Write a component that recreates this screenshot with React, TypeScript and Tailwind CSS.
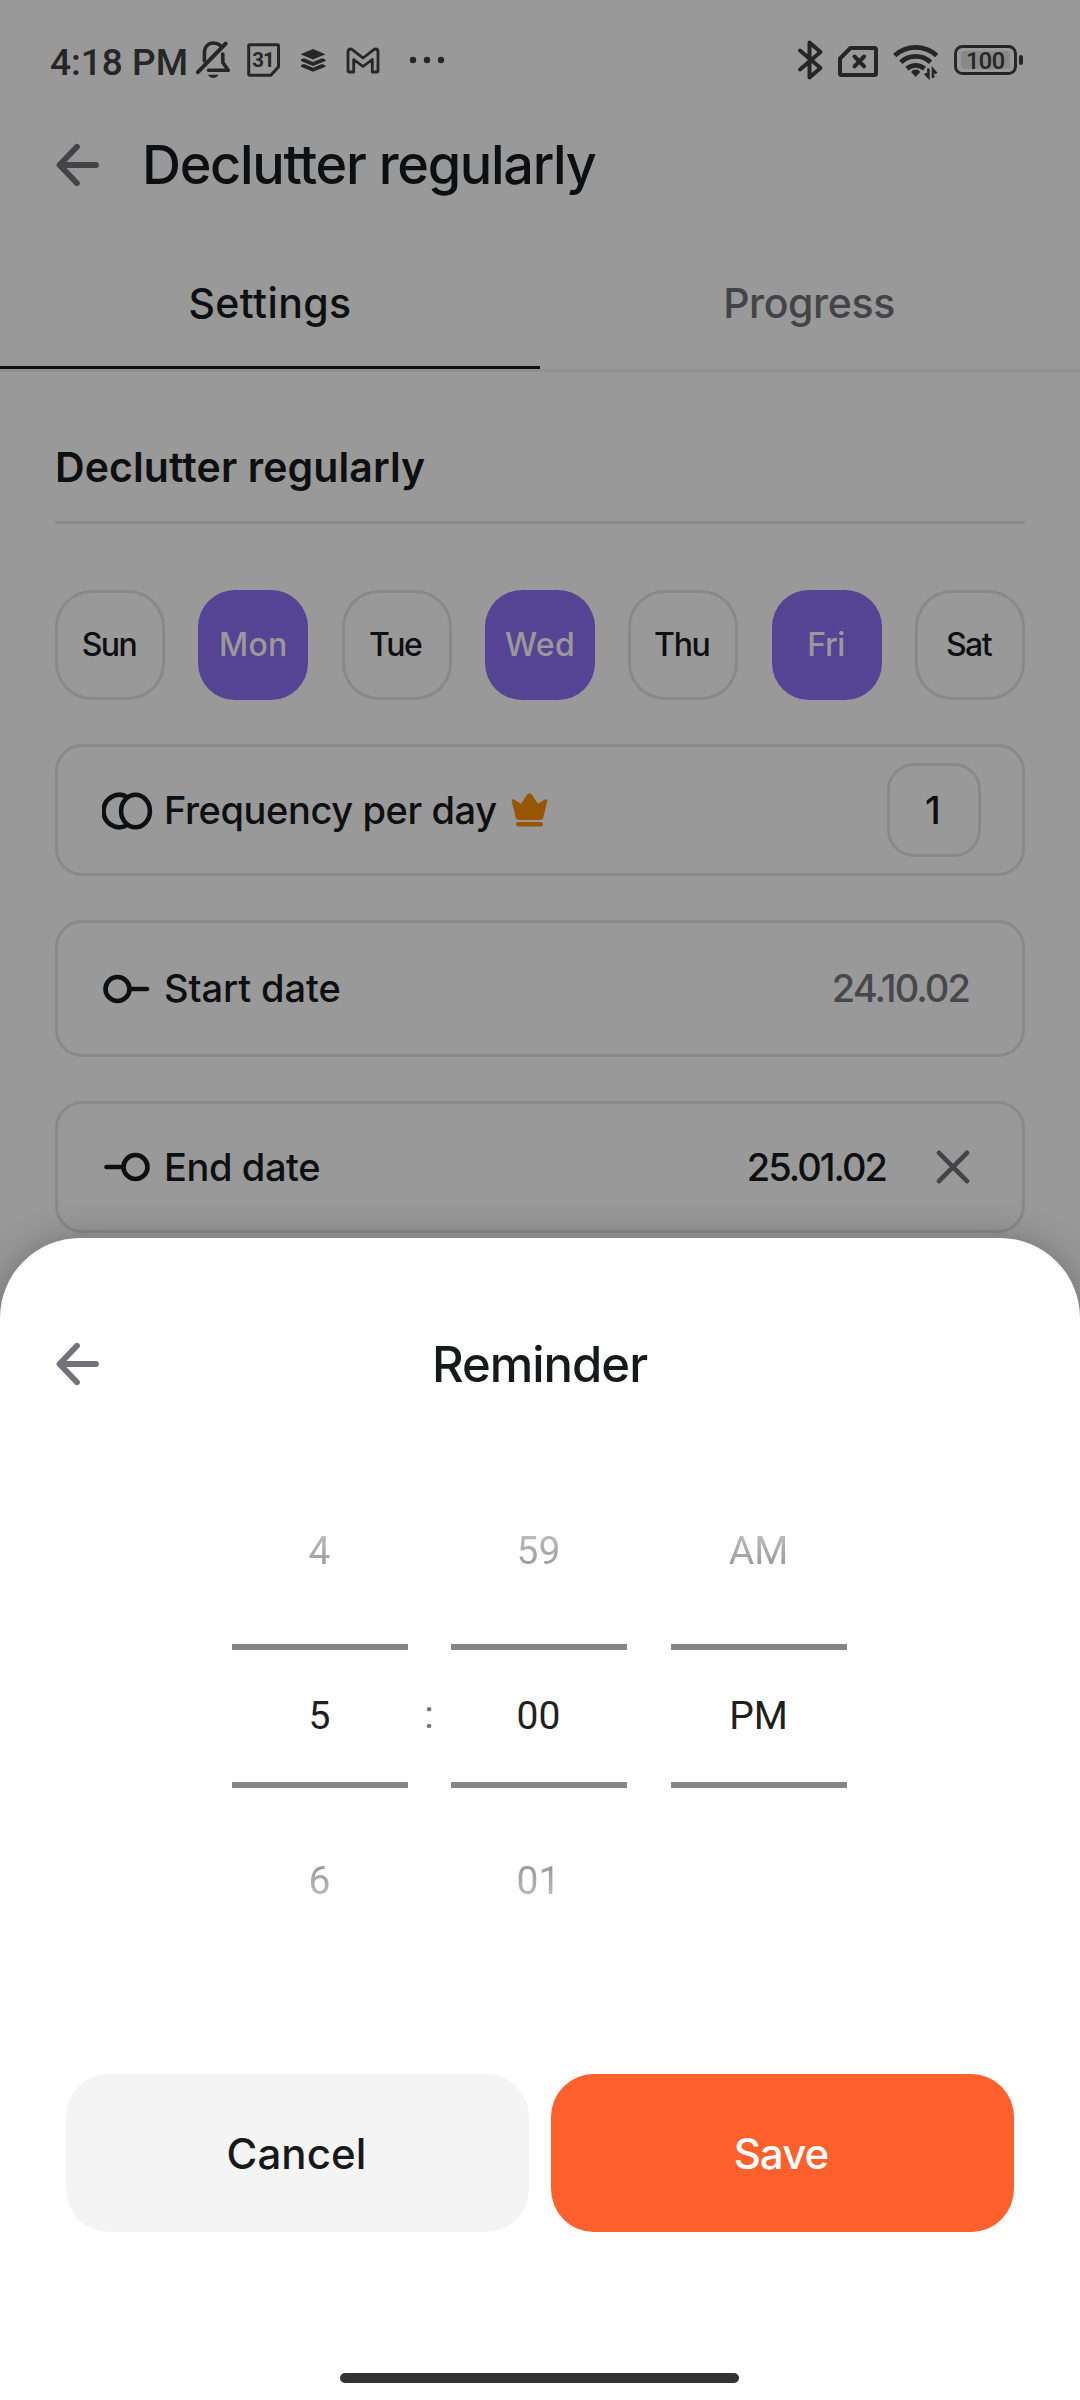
import type { ReactNode } from "react";

const STATUS = "#404040";

function BackArrow() {
  return (
    <svg width="48" height="48" viewBox="0 0 48 48" fill="none" stroke="#727278" strokeWidth="5.8" strokeLinecap="round" strokeLinejoin="round" className="shrink-0">
      <path d="M42 24H6M23 5.8 5.5 24 23 42.2" />
    </svg>
  );
}

function StatusBar() {
  return (
    <div className="flex h-[120px] items-center pl-[50px] pr-[56px] font-[Roboto] text-[#404040]">
      <span className="w-[146px] whitespace-nowrap text-[37px] font-medium leading-[44px] pt-[6px]">4:18 PM</span>
      <svg width="36" height="38" viewBox="0 0 36 38" fill="none" stroke={STATUS} strokeWidth="3.6" strokeLinecap="round" className="shrink-0">
        <path d="M1.9 31.2 29.6 2.6" strokeWidth="4" />
        <path d="M8.4 20V12.5C8.4 6 12 2 17.3 2 20 2 22.5 2.8 24.2 4.3" />
        <path d="M26.8 13V21.5L32.3 29.3H12.5" strokeLinejoin="round" />
        <path d="M12 33.8H22.5Q20.5 37 17.3 37T12 33.8Z" fill={STATUS} stroke="none" />
      </svg>
      <svg width="33" height="34" viewBox="0 0 33 34" fill="none" stroke={STATUS} className="ml-[15px] shrink-0">
        <path d="M3 1.7H30.5Q31.5 1.7 31.5 3V23.8L23.8 32.3H3Q1.7 32.3 1.7 31V3Q1.7 1.7 3 1.7Z" strokeWidth="3" />
        <text x="16" y="24" textAnchor="middle" fontFamily="Roboto" fontWeight="700" fontSize="20.5" letterSpacing="-1" fill={STATUS} stroke="none">31</text>
      </svg>
      <svg width="25" height="23" viewBox="0 0 25 23" fill={STATUS} className="ml-[21px] shrink-0">
        <path d="M12 0 24.5 5.2 12 10.4-.5 5.2Z" />
        <path d="M0 10.2 3 9.2 12 13 21 9.2 24.5 10.6V12L12 17 0 12Z" />
        <path d="M0 16 3 15 12 18.8 21 15 24.5 16.4V17.8L12 22.8 0 17.8Z" />
      </svg>
      <svg width="34" height="27" viewBox="0 0 34 27" fill="none" stroke={STATUS} strokeWidth="2.8" strokeLinejoin="round" className="ml-[20px] shrink-0">
        <path d="M2 23.5V5Q2 2 4.5 2 5.5 2 6.5 2.8L17 11 27.5 2.8Q28.5 2 29.5 2 32 2 32 5V23.5Q32 25 30.5 25H26.3V12.5L17 19.5 7.7 12.5V25H3.5Q2 25 2 23.5Z" />
      </svg>
      <svg width="36" height="8" viewBox="0 0 36 8" fill={STATUS} className="ml-[29px] shrink-0">
        <circle cx="4" cy="4" r="3.2" />
        <circle cx="18" cy="4" r="3.2" />
        <circle cx="32" cy="4" r="3.2" />
      </svg>
      <svg width="27" height="42" viewBox="0 0 27 42" fill="none" stroke={STATUS} strokeWidth="4" strokeLinecap="round" strokeLinejoin="round" className="ml-auto shrink-0">
        <path d="M3 11.5 23.5 29 12.5 38.5V3.5L23.5 13 3 30.5" />
      </svg>
      <svg width="40" height="31" viewBox="0 0 40 31" fill="none" stroke={STATUS} strokeWidth="4" strokeLinejoin="round" className="ml-[14px] mt-[3px] shrink-0">
        <path d="M12.5 2H36.5Q38 2 38 3.5V27.5Q38 29 36.5 29H3.5Q2 29 2 27.5V12.5Z" />
        <path d="m16.5 10.5 9.6 9.8m0-9.8-9.6 9.8" strokeLinecap="round" />
      </svg>
      <svg width="48" height="38" viewBox="0 0 48 38" fill="none" stroke={STATUS} strokeWidth="4.8" className="ml-[14px] mt-[2px] shrink-0">
        <path d="M2.7 13.6A31 31 0 0 1 44.7 13.6" />
        <path d="M8.8 20.2A22 22 0 0 1 38.6 20.2" />
        <path d="M14.9 26.6A13.5 13.5 0 0 1 32.5 26.6" />
        <path d="M23.7 27.6Q27 27.6 28.3 30L23.7 35 19.1 30Q20.4 27.6 23.7 27.6Z" fill={STATUS} stroke="none" />
        <path d="M36.4 26.5V35L33 31.5M41 36V27.5L44.5 31.5" strokeWidth="2.6" />
      </svg>
      <svg width="70" height="30" viewBox="0 0 70 30" fill="none" className="ml-[14px] shrink-0">
        <rect x="1.5" y="1.5" width="60" height="27" rx="7" stroke={STATUS} strokeWidth="3" />
        <rect x="7" y="6" width="49" height="18" rx="3.5" fill="#e4e4e4" />
        <rect x="65" y="10" width="4" height="10" rx="2" fill={STATUS} />
        <text x="31.5" y="24" textAnchor="middle" fontFamily="Roboto" fontSize="23.5" fontWeight="500" fill={STATUS} textLength="39">100</text>
      </svg>
    </div>
  );
}

const days = [
  { label: "Sun", on: false, tracking: "tracking-[-1.5px] pr-[2px]" },
  { label: "Mon", on: true, tracking: "tracking-[0.3px]" },
  { label: "Tue", on: false, tracking: "tracking-[-1.5px] pr-[3px]" },
  { label: "Wed", on: true, tracking: "tracking-[0.3px]" },
  { label: "Thu", on: false, tracking: "tracking-[-1.3px] pr-[3px]" },
  { label: "Fri", on: true, tracking: "tracking-[-0.4px] pr-[1px]" },
  { label: "Sat", on: false, tracking: "tracking-[-1.6px] pr-[3px]" },
];

function Card({ children, className }: { children: ReactNode; className: string }) {
  return (
    <div className={`mt-11 flex items-center rounded-[27px] border-[3px] border-[#e4e4e7] pl-[43px] text-[38px] font-medium ${className}`}>
      {children}
    </div>
  );
}

function Column({ prev, current, next }: { prev: string; current: string; next?: string }) {
  return (
    <div className="flex w-[176px] flex-col text-center text-[39px] leading-[46px]">
      <div className="flex h-[187px] items-center justify-center">
        <span className="bg-linear-to-b from-[#c2c2c2] to-[#939393] bg-clip-text text-transparent">{prev}</span>
      </div>
      <div className="flex h-36 items-center justify-center border-y-[6px] border-[#868686] text-[#1f1f20]">{current}</div>
      <div className="flex h-[185px] items-center justify-center">
        <span className="bg-linear-to-b from-[#939393] to-[#c2c2c2] bg-clip-text text-transparent">{next}</span>
      </div>
    </div>
  );
}

export default function App() {
  return (
    <div className="relative h-[2400px] w-[1080px] overflow-hidden bg-white font-[Inter,sans-serif] text-[#18191b]">
      <StatusBar />
      <header className="flex h-[90px] items-center pl-[54px]">
        <BackArrow />
        <h1 className="ml-10 whitespace-nowrap text-[54px] font-medium leading-none tracking-[-1.3px]">Declutter regularly</h1>
      </header>
      <nav className="mt-[30px] flex h-[132px] border-b-[3px] border-[#f2f2f2] text-[41px] font-medium">
        <div className="flex w-1/2 items-center justify-center border-b-[3px] border-[#191c1b] pt-[2px] tracking-[0.4px]">Settings</div>
        <div className="flex w-1/2 items-center justify-center border-b-[3px] border-transparent pr-[2px] pt-[2px] tracking-[-0.4px] text-[#727278]">Progress</div>
      </nav>
      <main className="px-[55px] pt-[41px]">
        <h2 className="flex h-[111px] items-center border-b-[3px] border-[#e4e4e7] pt-[2px] text-[41px] font-semibold tracking-[0.1px]">
          <span>Declutter regularly</span>
        </h2>
        <div className="mt-[66px] flex justify-between text-[32px] font-medium">
          {days.map((d) => (
            <div
              key={d.label}
              className={`flex size-[110px] items-center justify-center rounded-[37px] ${d.tracking} ${
                d.on ? "bg-[#8e70f7] text-white" : "border-[3px] border-[#e4e4e7]"
              }`}
            >
              {d.label}
            </div>
          ))}
        </div>
        <Card className="h-[132px] pr-[41px]">
          <svg width="52" height="38" viewBox="0 0 52 38" fill="none" stroke="#18191b" strokeWidth="4.6" className="ml-px mt-[2px] shrink-0">
            <path d="M24.4 33.5A15.8 16.2 0 1 1 24.4 4.5" />
            <ellipse cx="33.5" cy="19" rx="14.4" ry="16.2" />
          </svg>
          <span className="ml-[10px] whitespace-nowrap tracking-[-0.4px]">Frequency per day</span>
          <svg width="37" height="34" viewBox="0 0 37 34" fill="#ff9000" className="ml-[14px] shrink-0">
            <path d="M.6 7.200Q1.300 5.600 3 6.500L10 10.700 16.400 1.200Q18.500-.9 20.600 1.200L27 10.700 34 6.500Q36 5.600 36.400 7.200L32.500 24Q31.700 27 29 27H8Q5.300 27 4.500 24Z" />
            <rect x="5" y="29" width="27" height="4.4" rx="2.2" />
          </svg>
          <span className="ml-auto flex size-[94px] items-center justify-center rounded-[27px] border-[3px] border-[#e4e4e7] pr-[2px]">1</span>
        </Card>
        <Card className="h-[137px] pr-[53px]">
          <svg width="52" height="38" viewBox="0 0 52 38" fill="none" stroke="#18191b" strokeWidth="4.6" strokeLinecap="round" className="shrink-0">
            <circle cx="16.5" cy="19" r="12" />
            <path d="M29 19H46" />
          </svg>
          <span className="ml-[11px] tracking-[-0.1px]">Start date</span>
          <span className="ml-auto tracking-[-1.9px] text-[#78787f]">24.10.02</span>
        </Card>
        <Card className="h-[132px] pr-[52px]">
          <svg width="52" height="38" viewBox="0 0 52 38" fill="none" stroke="#18191b" strokeWidth="4.6" strokeLinecap="round" className="shrink-0">
            <circle cx="34.5" cy="19" r="12" />
            <path d="M5.5 19H22" />
          </svg>
          <span className="ml-[11px] tracking-[-0.4px]">End date</span>
          <span className="ml-auto tracking-[-2px]">25.01.02</span>
          <svg width="34" height="34" viewBox="0 0 34 34" fill="none" stroke="#727278" strokeWidth="4.6" strokeLinecap="round" className="ml-[50px] shrink-0">
            <path d="m3 2.800 28 28.400M31 2.800 3 31.200" />
          </svg>
        </Card>
      </main>

      <div className="absolute inset-0 bg-black/40" />

      <section className="absolute inset-x-0 bottom-0 flex h-[1162px] flex-col rounded-t-[80px] bg-white shadow-[0_4px_40px_rgba(0,0,0,0.3)]">
        <div className="mt-[84px] grid h-[84px] grid-cols-[48px_1fr_48px] items-center px-[54px]">
          <BackArrow />
          <h2 className="pr-[1px] text-center text-[49px] font-medium leading-none tracking-[-1px]">Reminder</h2>
        </div>
        <div className="mt-[51px] flex items-center justify-center pr-[2px] font-[Roboto]">
          <Column prev="4" current="5" next="6" />
          <span className="w-[43px] text-center text-[39px] leading-[46px] text-[#757575]">:</span>
          <Column prev="59" current="00" next="01" />
          <span className="w-11" />
          <Column prev="AM" current="PM" />
        </div>
        <div className="mt-[101px] grid h-[158px] grid-cols-2 gap-[22px] px-[66px] text-[42px] font-medium">
          <button className="rounded-[43px] bg-[#f4f4f4] pr-[2px] tracking-[0.1px]">Cancel</button>
          <button className="rounded-[43px] bg-[#ff602c] pr-[3px] tracking-[-0.9px] text-white">Save</button>
        </div>
        <div className="ml-[340px] mt-[141px] h-[10px] w-[399px] rounded-full bg-[#323232]" />
      </section>
    </div>
  );
}
